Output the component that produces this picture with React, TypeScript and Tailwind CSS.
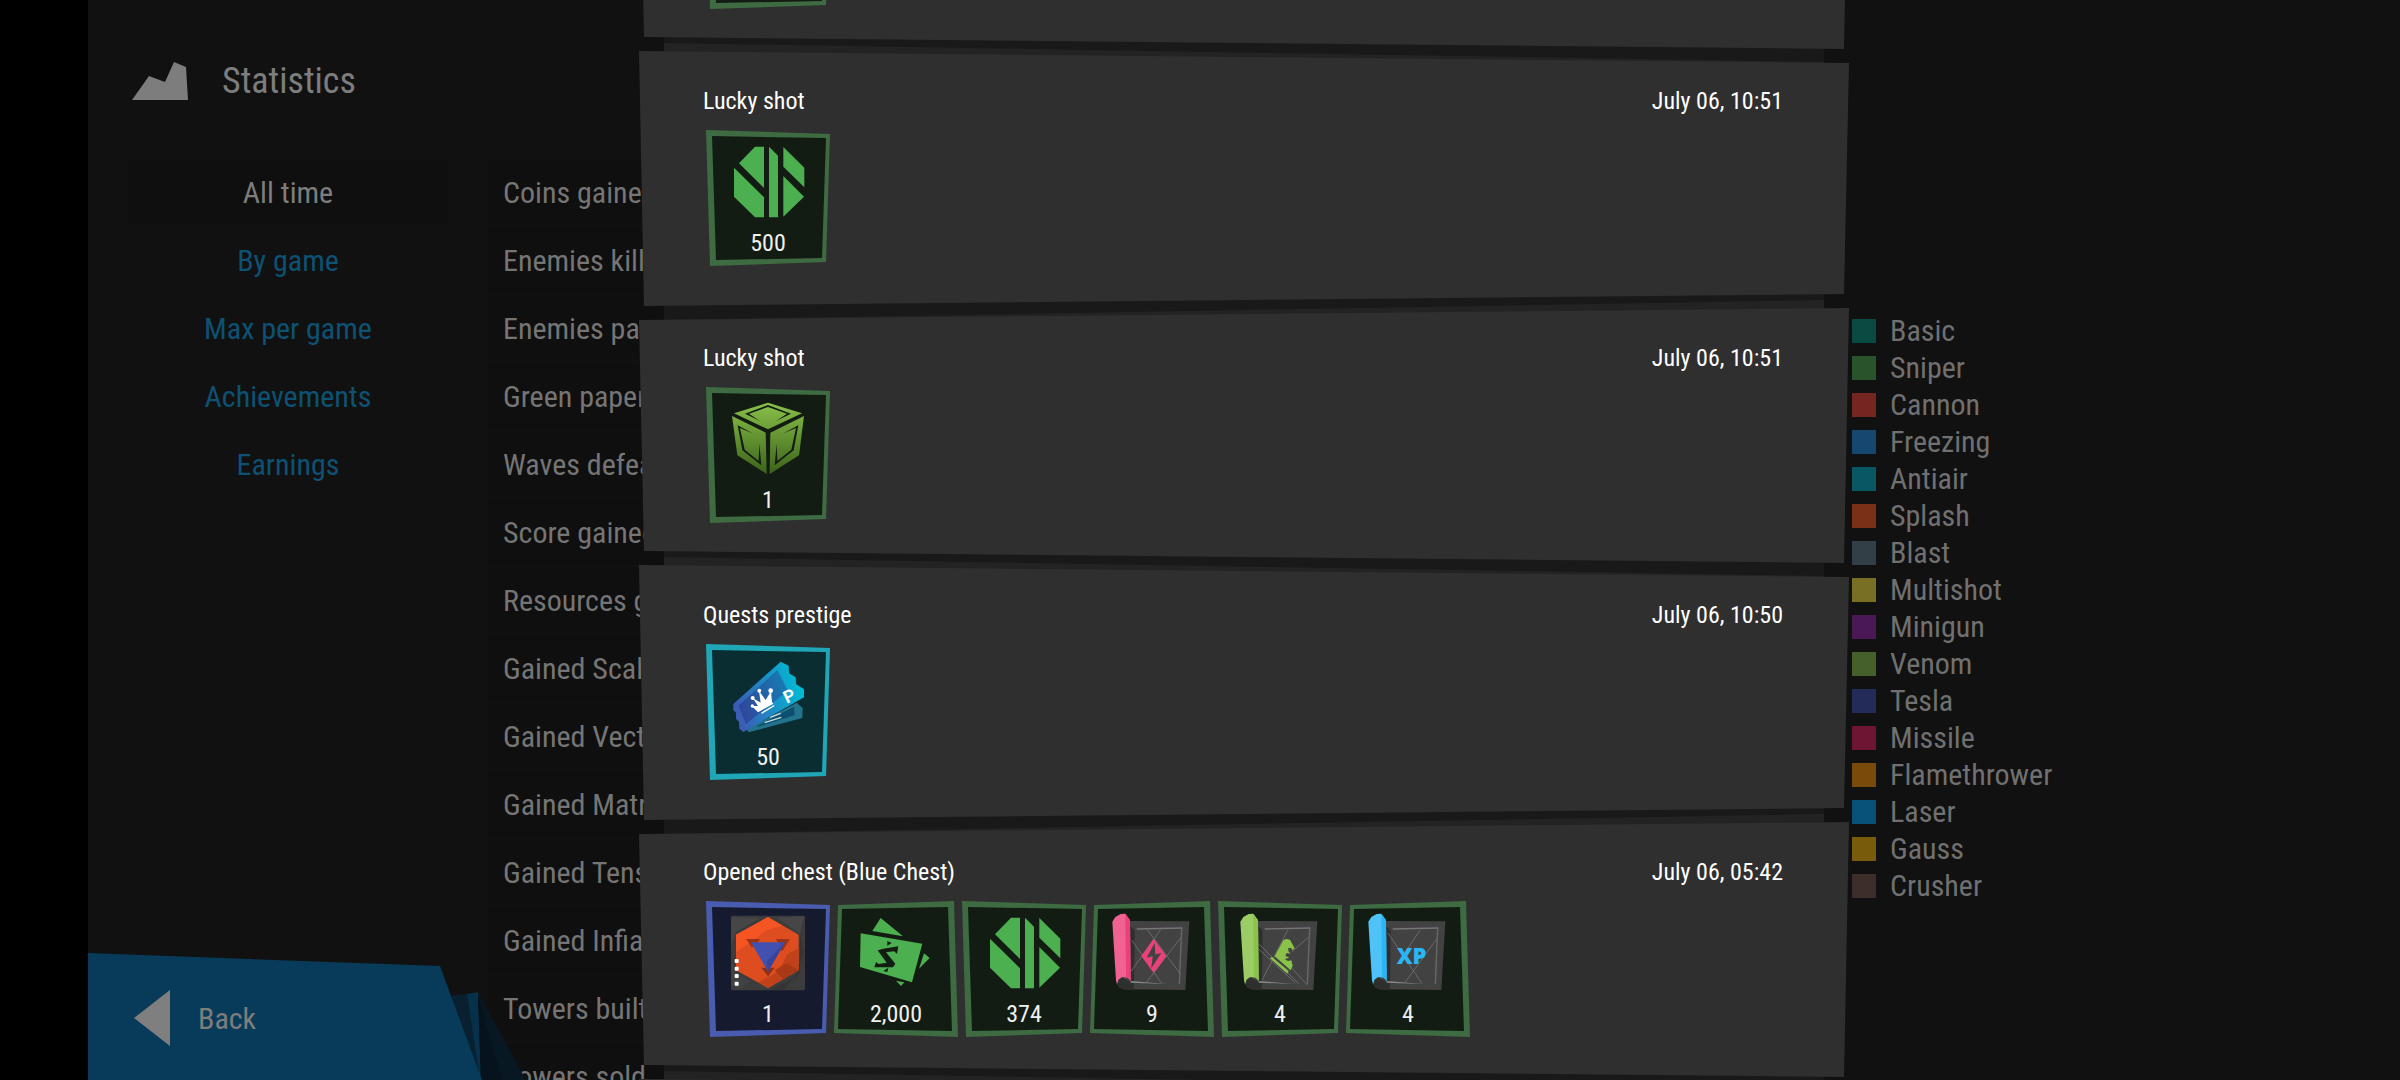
import React, { useState } from 'react';

type IconName = 'bit' | 'cube' | 'ticket' | 'tile' | 'cash' | 'scrollPink' | 'scrollGreen' | 'scrollBlue';
type Rarity = 'green' | 'cyan' | 'blue';

interface Item {
  icon: IconName;
  count: string;
  rarity: Rarity;
}

interface LogEntry {
  title: string;
  date: string;
  items: Item[];
}

const tabs = ['All time', 'By game', 'Max per game', 'Achievements', 'Earnings'];

const stats = [
  'Coins gained',
  'Enemies killed',
  'Enemies passed',
  'Green papers gained',
  'Waves defeated',
  'Score gained',
  'Resources gained',
  'Gained Scalars',
  'Gained Vectors',
  'Gained Matrices',
  'Gained Tensors',
  'Gained Infiars',
  'Towers built',
  'Towers sold',
];

const towers = [
  { name: 'Basic', color: 'bg-[#094a43]' },
  { name: 'Sniper', color: 'bg-[#29542b]' },
  { name: 'Cannon', color: 'bg-[#752620]' },
  { name: 'Freezing', color: 'bg-[#154770]' },
  { name: 'Antiair', color: 'bg-[#075863]' },
  { name: 'Splash', color: 'bg-[#793017]' },
  { name: 'Blast', color: 'bg-[#333f46]' },
  { name: 'Multishot', color: 'bg-[#796f24]' },
  { name: 'Minigun', color: 'bg-[#4b1856]' },
  { name: 'Venom', color: 'bg-[#466029]' },
  { name: 'Tesla', color: 'bg-[#232c58]' },
  { name: 'Missile', color: 'bg-[#6e1534]' },
  { name: 'Flamethrower', color: 'bg-[#784b0b]' },
  { name: 'Laser', color: 'bg-[#075377]' },
  { name: 'Gauss', color: 'bg-[#785c0b]' },
  { name: 'Crusher', color: 'bg-[#3d2e29]' },
];

// The first and last entries are only partly scrolled into view
const entries: LogEntry[] = [
  { title: '', date: '', items: [{ icon: 'bit', count: '', rarity: 'green' }] },
  { title: 'Lucky shot', date: 'July 06, 10:51', items: [{ icon: 'bit', count: '500', rarity: 'green' }] },
  { title: 'Lucky shot', date: 'July 06, 10:51', items: [{ icon: 'cube', count: '1', rarity: 'green' }] },
  { title: 'Quests prestige', date: 'July 06, 10:50', items: [{ icon: 'ticket', count: '50', rarity: 'cyan' }] },
  {
    title: 'Opened chest (Blue Chest)',
    date: 'July 06, 05:42',
    items: [
      { icon: 'tile', count: '1', rarity: 'blue' },
      { icon: 'cash', count: '2,000', rarity: 'green' },
      { icon: 'bit', count: '374', rarity: 'green' },
      { icon: 'scrollPink', count: '9', rarity: 'green' },
      { icon: 'scrollGreen', count: '4', rarity: 'green' },
      { icon: 'scrollBlue', count: '4', rarity: 'green' },
    ],
  },
  { title: '', date: '', items: [] },
];

const rarityStyles: Record<Rarity, { frame: string; fill: string }> = {
  green: { frame: 'bg-[#3e6b41]', fill: 'bg-[#131c13]' },
  cyan: { frame: 'bg-[#1fa7b8]', fill: 'bg-[#0a2d31]' },
  blue: { frame: 'bg-[#4a5cb0]', fill: 'bg-[#161a2f]' },
};

export default function App() {
  const [activeTab, setActiveTab] = useState('All time');

  return (
    <div className="h-screen overflow-hidden bg-black pl-[88px] font-['Roboto_Condensed',Roboto,sans-serif] text-[#7d7d7d]">
      <div className="relative h-full overflow-hidden bg-[#111111]">
        <main className="flex flex-col gap-[58px] pl-10 pt-[61px]">
          <header className="flex h-10 items-center gap-[34px] pl-1">
            <svg viewBox="0 0 56 38" className="h-[38px] w-14" fill="#7d7d7d" aria-hidden="true">
              <path d="M0 38 17 14 33 20 42 0 54 5 56 38z" />
            </svg>
            <h1 className="text-4xl">Statistics</h1>
          </header>

          <div className="flex items-start gap-10">
            <nav className="flex w-80 shrink-0 flex-col gap-0.5">
              {tabs.map((tab) => (
                <button
                  key={tab}
                  onClick={() => setActiveTab(tab)}
                  className={
                    tab === activeTab
                      ? 'h-[66px] bg-[#0f0f0f] text-center text-[30px] text-[#7d7d7d]'
                      : 'h-[66px] text-center text-[30px] text-[#0d5174]'
                  }
                >
                  {tab}
                </button>
              ))}
            </nav>

            <ul className="flex flex-1 flex-col gap-0.5">
              {stats.map((label) => (
                <li key={label} className="flex h-[66px] items-center bg-[#0f0f0f] pl-[15px] text-[30px] text-[#757575]">
                  {label}
                </li>
              ))}
            </ul>

            <ul className="flex w-[548px] shrink-0 flex-col gap-3 pt-[159px]">
              {towers.map((tower) => (
                <li key={tower.name} className="flex h-[25px] items-center gap-[14px] text-[30px] text-[#707070]">
                  <span className={`size-6 ${tower.color}`} />
                  {tower.name}
                </li>
              ))}
            </ul>
          </div>
        </main>

        <BackButton />

        <section role="dialog" aria-label="Item log" className="absolute inset-0 flex justify-center overflow-hidden">
          <div className="relative w-full max-w-[1210px]">
            <div className="absolute inset-x-[25px] inset-y-0 bg-[#191919]" />
            <div className="relative -mt-[206px] flex flex-col gap-0.5">
              {entries.map((entry, idx) => (
                <LogCard key={idx} entry={entry} flipped={idx % 2 === 0} />
              ))}
            </div>
          </div>
        </section>
      </div>
    </div>
  );
}

const BackButton: React.FC = () => (
  <button className="absolute bottom-0 left-0 h-32 w-[440px] text-left text-[30px]">
    <svg viewBox="0 0 440 128" className="absolute inset-0 h-32 w-[440px] overflow-visible" aria-hidden="true">
      <path d="M360 44 379 42 396 128H386z" fill="#08202f" />
      <path d="M379 42 390 40 394 128H392z" fill="#07304a" />
      <path d="M390 40 438 128H393z" fill="#071823" />
      <path d="M390 44 414 128H393z" fill="#06131c" />
    </svg>
    <span className="absolute inset-y-0 left-0 w-[394px] bg-[#083b59] [clip-path:polygon(0_1px,352px_14px,394px_100%,0_100%)]" />
    <span className="relative flex items-center gap-7 pl-[46px] pt-1">
      <svg viewBox="0 0 36 56" className="h-14 w-9" fill="#7f7f7f" aria-hidden="true">
        <path d="M0 28 36 0V56z" />
      </svg>
      Back
    </span>
  </button>
);

const LogCard: React.FC<{ entry: LogEntry; flipped: boolean }> = ({ entry, flipped }) => (
  <article className="relative h-[255px] pl-16 pr-[66px] pt-[34px] text-white">
    <div
      className={
        flipped
          ? 'absolute inset-x-[25px] -top-2 bottom-2 bg-[#232323] [clip-path:polygon(0_20px,100%_0,100%_90%,0_90%)]'
          : 'absolute inset-x-[25px] -top-2 bottom-2 bg-[#232323] [clip-path:polygon(0_0,100%_19px,100%_90%,0_90%)]'
      }
    />
    <div
      className={
        flipped
          ? 'absolute inset-0 bg-[#2f2f2f] [clip-path:polygon(0_12px,100%_0,calc(100%-5px)_100%,5px_calc(100%-12px))]'
          : 'absolute inset-0 bg-[#2f2f2f] [clip-path:polygon(0_0,100%_12px,calc(100%-5px)_calc(100%-12px),5px_100%)]'
      }
    />
    <div className="relative flex min-h-8 justify-between text-2xl leading-8">
      <h2>{entry.title}</h2>
      <time>{entry.date}</time>
    </div>
    <ul className="relative ml-px mt-[13px] flex">
      {entry.items.map((item, idx) => (
        <ItemTile key={idx} item={item} flipped={idx % 2 === 1} />
      ))}
    </ul>
  </article>
);

const ItemTile: React.FC<{ item: Item; flipped: boolean }> = ({ item, flipped }) => {
  const tone = rarityStyles[item.rarity];
  return (
    <li className="relative flex h-[136px] w-32 flex-col items-center gap-[7px] pt-[14px]">
      <div
        className={`absolute inset-0 ${tone.frame} ${
          flipped
            ? '[clip-path:polygon(6px_4px,122px_0,126px_136px,2px_132px)]'
            : '[clip-path:polygon(2px_0,126px_4px,122px_132px,6px_136px)]'
        }`}
      />
      <div
        className={`absolute inset-0 ${tone.fill} ${
          flipped
            ? '[clip-path:polygon(10px_8px,116px_6px,120px_130px,6px_128px)]'
            : '[clip-path:polygon(8px_6px,122px_8px,118px_128px,12px_130px)]'
        }`}
      />
      <svg viewBox="0 0 228 228" className="relative size-[76px] overflow-visible" aria-hidden="true">
        {icons[item.icon]}
      </svg>
      <span className="relative text-2xl leading-8 text-[#f0f0f0]">{item.count}</span>
    </li>
  );
};

const Scroll: React.FC<{ light: string; dark: string; children: React.ReactNode }> = ({ light, dark, children }) => (
  <>
    <path d="M46 18 226 19 214 225 30 223 8 208 20 190z" fill="#424242" />
    <path d="M48 34 62 46 60 224H30L16 218 8 206 24 188 50 200z" fill="#2f2f2f" />
    <path d="M68 42 205 39" stroke="#767676" strokeWidth="4" fill="none" />
    <path d="M203 39 196 208" stroke="#6a6a6a" strokeWidth="4" fill="none" />
    <path d="M50 198 160 207 50 203z" fill="#8a8a8a" />
    {children}
    <path d="M-5 20 4 6 20 -3 34 -4 48 16 50 198 42 188 24 186 14 194 9 208 6 196z" fill={light} />
    <path d="M34 -4 48 16 50 198 42 188 36 187z" fill={dark} />
  </>
);

const icons: Record<IconName, React.ReactNode> = {
  bit: (
    <g transform="translate(12 8)" fill="#4caf50">
      <path d="M63 0H90V124L15 50z" />
      <path d="M0 63 90 152V212H63L0 150z" />
      <path d="M105 0 132 27V212H105z" />
      <path d="M148 1 211 63V122L148 60z" />
      <path d="M148 88 210 150 148 210z" />
    </g>
  ),
  cube: (
    <>
      <defs>
        <linearGradient id="cubeFill" gradientUnits="userSpaceOnUse" x1="114" y1="0" x2="114" y2="220">
          <stop offset="0" stopColor="#8bc34a" />
          <stop offset="1" stopColor="#3b6219" />
        </linearGradient>
      </defs>
      <g fill="url(#cubeFill)">
        <path d="M114 5 216 37 114 85 12 37z" />
        <path d="M6 45 107 95 110 219 22 163z" />
        <path d="M222 45 121 95 119 219 207 163z" />
      </g>
      <g fill="#131c13">
        <path d="M90 60 45 38 114 12 183 38 138 60 171 38 114 18 57 38z" />
        <path d="M70 98 23 73 37 148 94 193 88 128 86 180 44 146 30 81z" />
        <path d="M158 98 205 73 191 148 134 193 140 128 142 180 184 146 198 81z" />
      </g>
    </>
  ),
  ticket: (
    <>
      <defs>
        <linearGradient id="ticketFill" gradientUnits="userSpaceOnUse" x1="20" y1="150" x2="215" y2="100">
          <stop offset="0" stopColor="#3b5bb5" />
          <stop offset="1" stopColor="#00bcd4" />
        </linearGradient>
        <linearGradient id="ticketInner" gradientUnits="userSpaceOnUse" x1="25" y1="150" x2="190" y2="100">
          <stop offset="0" stopColor="#31449a" />
          <stop offset="1" stopColor="#1580b4" />
        </linearGradient>
      </defs>
      <path d="M50 214 200 134 218 150 217 180 56 223z" fill="#23738d" />
      <path d="M80 205 192 146 194 172 84 206z" fill="#0c4f70" />
      <path d="M120 178 152 166M104 194 154 178" stroke="#c8d8e0" strokeWidth="4" />
      <path
        d="M152 11 176 23 177 46 197 58 198 78 222 94V118L40 222 28 212 27 191 18 182V164L10 156V138z"
        fill="url(#ticketFill)"
      />
      <path d="M25 143 142 36 174 98 48 198z" fill="url(#ticketInner)" />
      <g fill="#ffffff">
        <path d="M65 144 84 144 68 120 92 134 87 99 107 126 123 99 126 132 130 137 84 163z" />
        <circle cx="67" cy="144" r="5" />
        <circle cx="68" cy="120" r="6" />
        <circle cx="88" cy="98" r="6" />
        <circle cx="122" cy="98" r="7" />
        <path d="M93 164 132 141 134 144 96 167z" />
      </g>
      <text x="170" y="137" fontSize="52" fontWeight="700" fontFamily="Roboto, sans-serif" fill="#ffffff" transform="rotate(-25 170 137)">
        P
      </text>
    </>
  ),
  tile: (
    <>
      <rect x="3" y="2" width="222" height="224" rx="5" fill="#3c3c3c" />
      <path d="M3 7 90 10 18 50 3 90zM140 8 222 4 210 56z" fill="#464646" />
      <path d="M210 60 222 110 190 200 210 170zM120 222 190 190 160 226z" fill="#353535" />
      <path d="M3 130 16 170 60 200 30 222 3 210z" fill="#424242" />
      <path d="M114 6 206 59V166L114 219 18 166V59z" fill="#dd4d1f" />
      <path d="M114 6 158 32 110 46 60 84 18 110V59z" fill="#f45522" />
      <path d="M206 100V166L114 219 84 202 146 170 172 118z" fill="#c0421a" />
      <path d="M206 166 160 193 134 166 170 145z" fill="#a83816" />
      <path d="M48 72H90L82 84 66 98zM138 72H180L156 110z" fill="#9c3517" />
      <path d="M94 158H134L114 184z" fill="#8f3016" />
      <path d="M63 82H165L114 170z" fill="#4250b0" />
      <path d="M165 82 114 170 110 140z" fill="#38449b" />
      <g fill="#ffffff">
        <rect x="14" y="132" width="12" height="12" rx="3" />
        <rect x="14" y="155" width="12" height="12" rx="3" />
        <rect x="14" y="177" width="12" height="12" rx="3" />
        <rect x="14" y="200" width="12" height="12" rx="3" />
      </g>
    </>
  ),
  cash: (
    <>
      <g fill="#4caf50">
        <path d="M68 9 135 64 43 48z" />
        <path d="M8 55 193 86 162 202 6 156z" />
        <path d="M198 115 215 129 183 161z" />
        <path d="M114 197 139 202 129 213z" />
      </g>
      <path d="M59 106 76 101 121 94 117 116 108 109 84 112 112 146 105 157 49 157 54 141 62 147 86 143z" fill="#131c13" />
      <path d="M88 78 101 84 88 92zM76 168 91 158 88 171z" fill="#131c13" />
    </>
  ),
  scrollPink: (
    <Scroll light="#f06292" dark="#ec407a">
      <path
        d="M100 44 200 178M140 44 52 168M54 76 142 204M200 68 96 204"
        stroke="#6a6a6a"
        strokeWidth="3"
        fill="none"
      />
      <path d="M119 71 157 123 119 174 82 123z" fill="#ec407a" />
      <path d="M122 84 98 128 116 124 112 160 142 114 124 118z" fill="#424242" />
    </Scroll>
  ),
  scrollGreen: (
    <Scroll light="#9ccc65" dark="#8bc34a">
      <path d="M138 44 60 196M200 66 150 110M52 88 170 206M50 102 160 204M150 160 196 210" stroke="#6a6a6a" strokeWidth="3" fill="none" />
      <path
        d="M124 76 132 72 144 74 158 100 150 106 148 98 138 100 140 110 146 116 134 114 130 122 142 128 128 132 138 138 148 136 152 152 146 166 98 124z"
        fill="#8bc34a"
      />
      <path d="M84 130 90 126 140 168 136 176z" fill="#8bc34a" />
    </Scroll>
  ),
  scrollBlue: (
    <Scroll light="#4fc3f7" dark="#29b6f6">
      <path d="M150 46 100 120M54 54 156 206M200 72 104 204" stroke="#6a6a6a" strokeWidth="3" fill="none" />
      <text x="80" y="147" fontSize="66" fontWeight="800" fontFamily="Open Sans, sans-serif" fill="#29b6f6">
        XP
      </text>
    </Scroll>
  ),
};
